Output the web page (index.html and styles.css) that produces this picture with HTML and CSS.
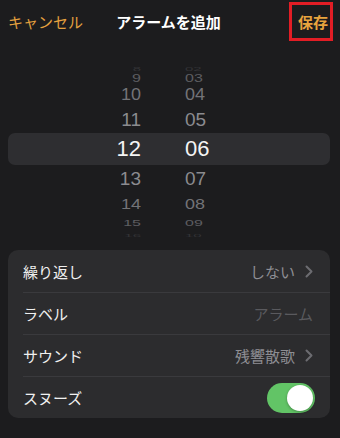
FILE: index.html
```html
<!DOCTYPE html>
<html lang="ja">
<head>
<meta charset="utf-8">
<title>アラームを追加</title>
<link rel="stylesheet" href="styles.css">
</head>
<body>
<div class="screen">
  <header class="nav">
    <span class="nav-cancel">キャンセル</span>
    <span class="nav-title">アラームを追加</span>
    <span class="nav-save">保存</span>
  </header>

  <div class="picker">
    <div class="prow r4"><span class="h">8</span><span class="m">02</span></div>
    <div class="prow r3"><span class="h">9</span><span class="m">03</span></div>
    <div class="prow r2 top"><span class="h">10</span><span class="m">04</span></div>
    <div class="prow r1 top"><span class="h">11</span><span class="m">05</span></div>
    <div class="prow sel"><span class="h">12</span><span class="m">06</span></div>
    <div class="prow r1 bot"><span class="h">13</span><span class="m">07</span></div>
    <div class="prow r2 bot"><span class="h">14</span><span class="m">08</span></div>
    <div class="prow r3b"><span class="h">15</span><span class="m">09</span></div>
    <div class="prow r4b"><span class="h">16</span><span class="m">10</span></div>
  </div>

  <div class="card">
    <div class="row">
      <span class="label">繰り返し</span>
      <span class="value">しない</span>
      <svg class="chev" width="8" height="13" viewBox="0 0 8 13"><path d="M1.5 1.5 L6.5 6.5 L1.5 11.5" fill="none" stroke="#6c6c71" stroke-width="2" stroke-linecap="round" stroke-linejoin="round"/></svg>
    </div>
    <div class="row">
      <span class="label">ラベル</span>
      <span class="value placeholder">アラーム</span>
    </div>
    <div class="row">
      <span class="label">サウンド</span>
      <span class="value">残響散歌</span>
      <svg class="chev" width="8" height="13" viewBox="0 0 8 13"><path d="M1.5 1.5 L6.5 6.5 L1.5 11.5" fill="none" stroke="#6c6c71" stroke-width="2" stroke-linecap="round" stroke-linejoin="round"/></svg>
    </div>
    <div class="row">
      <span class="label">スヌーズ</span>
      <span class="toggle"><span class="knob"></span></span>
    </div>
  </div>
</div>
</body>
</html>
```

FILE: styles.css
```css
html, body {
  margin: 0;
  padding: 0;
  background: #1c1c1e;
}
body {
  width: 340px;
  height: 438px;
  overflow: hidden;
  font-family: "Liberation Sans", "Noto Sans CJK JP", sans-serif;
  color: #f2f2f2;
}
.screen {
  display: flex;
  flex-direction: column;
}

/* nav */
.nav {
  display: grid;
  grid-template-columns: 1fr auto 1fr;
  align-items: center;
  padding: 2px 7px 0 8px;
  height: 39px;
}
.nav-cancel {
  justify-self: start;
  color: #e3a03e;
  font-size: 15px;
}
.nav-title {
  color: #ffffff;
  font-size: 15px;
  font-weight: 700;
  margin-right: 4px;
}
.nav-save {
  justify-self: end;
  color: #e8a43e;
  font-size: 15px;
  font-weight: 700;
  border: 3px solid #e21d25;
  height: 33px;
  display: flex;
  align-items: center;
  padding: 0 2px 0 6px;
}

/* picker */
.picker {
  margin-top: 21px;
  display: flex;
  flex-direction: column;
}
.prow {
  display: grid;
  grid-template-columns: 133px 44px 1fr;
  align-items: center;
  margin: 0 10px 0 8px;
  line-height: 1;
}
.prow .h {
  grid-column: 1;
  text-align: right;
}
.prow .m {
  grid-column: 3;
  text-align: left;
}
.prow span {
  display: block;
}
.sel {
  height: 32px;
  background: #2e2e31;
  border-radius: 7px;
  font-size: 22px;
  color: #f4f4f4;
}
.r1 {
  height: 27px;
  font-size: 19px;
  color: #8b8b8f;
}
.r1 span { transform: scaleY(0.94); }
.r2 {
  font-size: 18px;
  color: #737377;
}
.r2.top { height: 24px; }
.r2.bot { height: 23px; }
.r2.top span { transform: scaleY(0.92); }
.r2.bot span { transform: scaleY(0.85); }
.r3 {
  height: 12px;
  font-size: 16px;
  color: #5d5d61;
}
.r3 span { transform: scaleY(0.7); }
.r3b {
  height: 13px;
  font-size: 16px;
  color: #5d5d61;
}
.r3b span { transform: scaleY(0.6); }
.r4 {
  height: 8px;
  font-size: 15px;
  color: #333336;
}
.r4 span { transform: scaleY(0.3); }
.r4b {
  height: 6px;
  font-size: 15px;
  color: #333336;
}
.r4b span { transform: scaleY(0.25); }

/* card */
.card {
  margin: 16px 10px 0 8px;
  background: #2c2c2e;
  border-radius: 10px;
  display: flex;
  flex-direction: column;
  overflow: hidden;
}
.row {
  box-sizing: border-box;
  height: 42px;
  margin-left: 15px;
  padding-right: 17px;
  display: flex;
  align-items: center;
  font-size: 15px;
}
.row + .row {
  border-top: 1px solid #3a3a3d;
}
.label {
  flex: 1;
  color: #f0f0f0;
}
.value {
  color: #8e8e93;
}
.placeholder {
  color: #5a5a5e;
}
.chev {
  margin-left: 10px;
  display: block;
}
.toggle {
  width: 48px;
  height: 30px;
  border-radius: 15px;
  background: #62c466;
  margin-right: -2px;
  margin-top: 1px;
  display: flex;
  align-items: center;
  justify-content: flex-end;
  padding: 0 2px;
  box-sizing: border-box;
}
.knob {
  width: 26px;
  height: 26px;
  border-radius: 50%;
  background: #ffffff;
  box-shadow: 0 1px 3px rgba(0,0,0,0.3);
}
```
